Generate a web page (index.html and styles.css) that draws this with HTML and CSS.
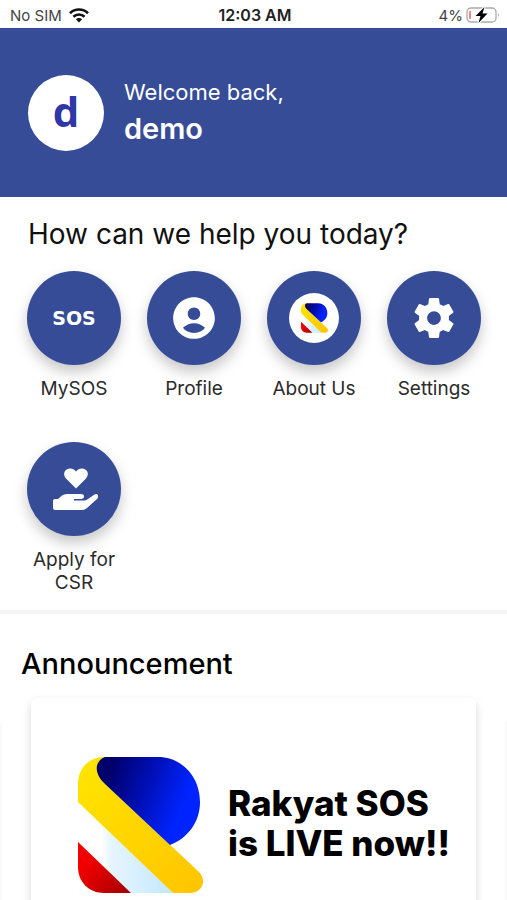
FILE: index.html
```html
<!DOCTYPE html>
<html lang="en">
<head>
<meta charset="utf-8">
<meta name="viewport" content="width=device-width, initial-scale=1">
<title>Rakyat SOS</title>
<link rel="stylesheet" href="styles.css">
</head>
<body>
<svg class="defs" aria-hidden="true">
  <defs>
    <linearGradient id="blue" x1="0.1" y1="0.25" x2="0.85" y2="0.5"><stop offset="0" stop-color="#00006c"/><stop offset="0.5" stop-color="#0010b8"/><stop offset="1" stop-color="#0024ff"/></linearGradient>
    <linearGradient id="yellow" x1="0" y1="0" x2="1" y2="1"><stop offset="0" stop-color="#ffe600"/><stop offset="1" stop-color="#ffc400"/></linearGradient>
    <linearGradient id="red" x1="0.2" y1="0.4" x2="0.9" y2="1"><stop offset="0" stop-color="#f00000"/><stop offset="1" stop-color="#a80000"/></linearGradient>
    <linearGradient id="ice" x1="0" y1="0" x2="1" y2="0"><stop offset="0.25" stop-color="#ffffff"/><stop offset="0.35" stop-color="#e6f5fe"/><stop offset="1" stop-color="#c2e8ff"/></linearGradient>
    <symbol id="logo" viewBox="0 0 125 136">
      <path fill="url(#ice)" d="M0 45L95 136H52L0 85Z"/>
      <path fill="url(#red)" d="M0 85L53 136H26C11 136 0 125 0 110Z"/>
      <path fill="url(#yellow)" d="M27 0H34L26 26L120 114C130 123 124 136 112 136H95L0 45V27C0 11 11 0 27 0Z"/>
      <path fill="url(#blue)" d="M27 0H80C104 0 122 20 122 45C122 65 110 81 92 88L27 27C17 18 15 5 27 0Z"/>
    </symbol>
  </defs>
</svg>
<div class="screen">
  <div class="status">
    <div class="carrier">
      <span>No SIM</span>
      <svg width="20" height="15" viewBox="0 0 20 15" fill="none" stroke="#111" stroke-width="2.6" aria-hidden="true"><path d="M1 5.2C6 .3 14 .3 19 5.2M4.4 8.8C7.600 5.700 12.400 5.700 15.600 8.800"/><path fill="#111" stroke="none" d="M10 14.500L6.900 11.300C8.700 9.700 11.300 9.700 13.100 11.300Z"/></svg>
    </div>
    <span class="time">12:03 AM</span>
    <div class="battery">
      <span>4%</span>
      <svg width="34" height="18" viewBox="0 0 34 18" aria-hidden="true"><rect x="1" y="2" width="29" height="14" rx="4" fill="none" stroke="#aaa" stroke-width="1.300"/><path d="M32 7Q34 9 32 11Z" fill="#aaa"/><path d="M4 5V13" stroke="#f44336" stroke-width="1.300"/><path d="M18.500 1L9.500 10H14.500L12.500 17L21.500 7.500H16.500Z" fill="#000" stroke="#fff" stroke-width="2.400" paint-order="stroke"/></svg>
    </div>
  </div>
  <header class="hero">
    <div class="avatar">d</div>
    <div>
      <p class="welcome">Welcome back,</p>
      <p class="name">demo</p>
    </div>
  </header>
  <main>
    <section class="help">
      <h1>How can we help you today?</h1>
      <nav class="tiles">
        <a class="tile" href="#sos"><span class="disc sos">SOS</span><span>MySOS</span></a>
        <a class="tile" href="#profile"><span class="disc"><svg width="50" height="50" viewBox="0 0 24 24" fill="#fff" aria-hidden="true"><path d="M12 2C6.480 2 2 6.480 2 12s4.480 10 10 10 10-4.480 10-10S17.520 2 12 2zm0 5c1.660 0 3 1.340 3 3s-1.340 3-3 3-3-1.340-3-3 1.340-3 3-3zm0 12.200c-2.300 0-4.200-1-5.300-2.500C8 15.300 10 14.500 12 14.500s4 .8 5.300 2.200c-1.100 1.500-3 2.500-5.300 2.500z"/></svg></span><span>Profile</span></a>
        <a class="tile" href="#about"><span class="disc"><span class="badge"><svg width="27" height="30" aria-hidden="true"><use href="#logo"/></svg></span></span><span>About Us</span></a>
        <a class="tile" href="#settings"><span class="disc"><svg width="50" height="50" viewBox="0 0 24 24" fill="#fff" aria-hidden="true"><path d="M19.140 12.940c.04-.3.060-.61.060-.94 0-.32-.02-.64-.07-.94l2.030-1.580c.18-.14.230-.41.120-.61l-1.920-3.320c-.12-.22-.37-.29-.59-.22l-2.390.96c-.5-.38-1.030-.7-1.620-.94l-.36-2.540c-.04-.24-.24-.41-.48-.41h-3.840c-.24 0-.43.17-.47.41l-.36 2.540c-.59.24-1.130.57-1.620.94l-2.390-.96c-.22-.08-.47 0-.59.22L2.740 8.870c-.12.210-.08.470.12.610l2.030 1.580c-.05.3-.09.63-.09.94s.02.640.07.940l-2.030 1.580c-.18.140-.23.410-.12.610l1.920 3.320c.12.220.37.290.59.220l2.390-.96c.5.380 1.030.7 1.620.94l.36 2.540c.05.240.24.410.48.410h3.840c.24 0 .44-.17.470-.41l.36-2.540c.59-.24 1.130-.56 1.620-.94l2.390.96c.22.080.47 0 .59-.22l1.920-3.320c.12-.22.070-.47-.12-.61l-2.010-1.580zM12 15.300c-1.800 0-3.300-1.500-3.300-3.300s1.500-3.300 3.300-3.300 3.300 1.500 3.300 3.300-1.500 3.300-3.300 3.300z"/></svg></span><span>Settings</span></a>
        <a class="tile" href="#csr"><span class="disc"><svg width="48" height="44" viewBox="-2 0 48 44" fill="#fff" aria-hidden="true"><path d="M24 21.500L14 11.500C10 7 13 1.500 18 1.500C21 1.500 23 3 24 4.500C25 3 27 1.500 30 1.500C35 1.500 38 7 34 11.500Z"/><path d="M3 32H6L10 28.500Q12 27 15 27H29C33 27 33 32 29 32H22V33.500H32Q34 33.500 36 32L42.500 27.500C45.500 25.500 47.500 29 45 32L35 41Q33 43 30 43H3Q1 43 1 41V34Q1 32 3 32Z"/></svg></span><span>Apply for CSR</span></a>
      </nav>
    </section>
    <section class="news">
      <h2>Announcement</h2>
      <div class="carousel">
        <div class="peek"></div>
        <article class="card">
          <svg class="mark" width="125" height="136" role="img" aria-label="Rakyat SOS logo"><use href="#logo"/></svg>
          <p>Rakyat SOS<br>is LIVE now!!</p>
        </article>
        <div class="peek"></div>
      </div>
    </section>
  </main>
</div>
</body>
</html>
```

FILE: styles.css
```css
* { box-sizing: border-box; }
body { margin: 0; background: #fff; color: #111; font-family: Inter, sans-serif; }
p, h1, h2 { margin: 0; }
.defs { position: absolute; width: 0; height: 0; }
.screen { height: 100vh; overflow: hidden; }

.status { display: grid; grid-template-columns: 1fr auto 1fr; align-items: center; height: 28px; padding: 2px 7px 0 10px; font-size: 15px; color: #444; }
.carrier, .battery { display: flex; align-items: center; gap: 7px; }
.battery { justify-content: flex-end; gap: 3px; }
.time { font-size: 16px; font-weight: 600; color: #222; }

.hero { display: flex; align-items: center; gap: 20px; height: 169px; padding: 0 28px; background: #364c97; color: #fff; }
.avatar { display: flex; align-items: center; justify-content: center; width: 76px; height: 76px; padding-bottom: 4px; border-radius: 50%; background: #fff; color: #2f36a5; font: 700 42px "Open Sans", sans-serif; }
.welcome { font-size: 22px; line-height: 36px; }
.name { padding-bottom: 4px; font-size: 29px; line-height: 38px; font-weight: 600; }

.help { padding: 20px 13px 16px 14px; border-bottom: 4px solid #f5f5f5; }
h1 { padding: 0 14px; font-size: 28px; line-height: 34px; font-weight: 400; }
.tiles { display: grid; grid-template-columns: repeat(4, 1fr); row-gap: 42px; margin-top: 20px; }
.tile { display: flex; flex-direction: column; align-items: center; gap: 12px; padding: 0 8px; color: #2b2b2b; font-size: 19px; line-height: 23px; text-align: center; text-decoration: none; }
.disc { display: flex; align-items: center; justify-content: center; width: 94px; height: 94px; border-radius: 50%; background: #364c97; box-shadow: 0 7px 14px rgba(0, 0, 0, 0.22); }
.sos { color: #fff; font: 700 19px "DejaVu Sans", sans-serif; }
.badge { display: flex; align-items: center; justify-content: center; width: 50px; height: 50px; border-radius: 50%; background: #fff; }

.news { padding-top: 34px; }
h2 { padding: 0 21px; font-size: 29px; line-height: 32px; font-weight: 500; color: #000; }
.carousel { display: grid; grid-template-columns: 2px 1fr 2px; column-gap: 29px; margin-top: 18px; }
.card { display: flex; align-items: flex-start; gap: 25px; min-height: 240px; padding: 59px 16px 40px 47px; border-radius: 6px; background: #fff; box-shadow: 0 4px 8px rgba(0, 0, 0, 0.16); }
.card p { padding-top: 26px; font-size: 35px; line-height: 40px; font-weight: 800; color: #000; white-space: nowrap; }
.mark { flex: none; }
.peek { margin-top: 24px; background: #fafafa; }
```
